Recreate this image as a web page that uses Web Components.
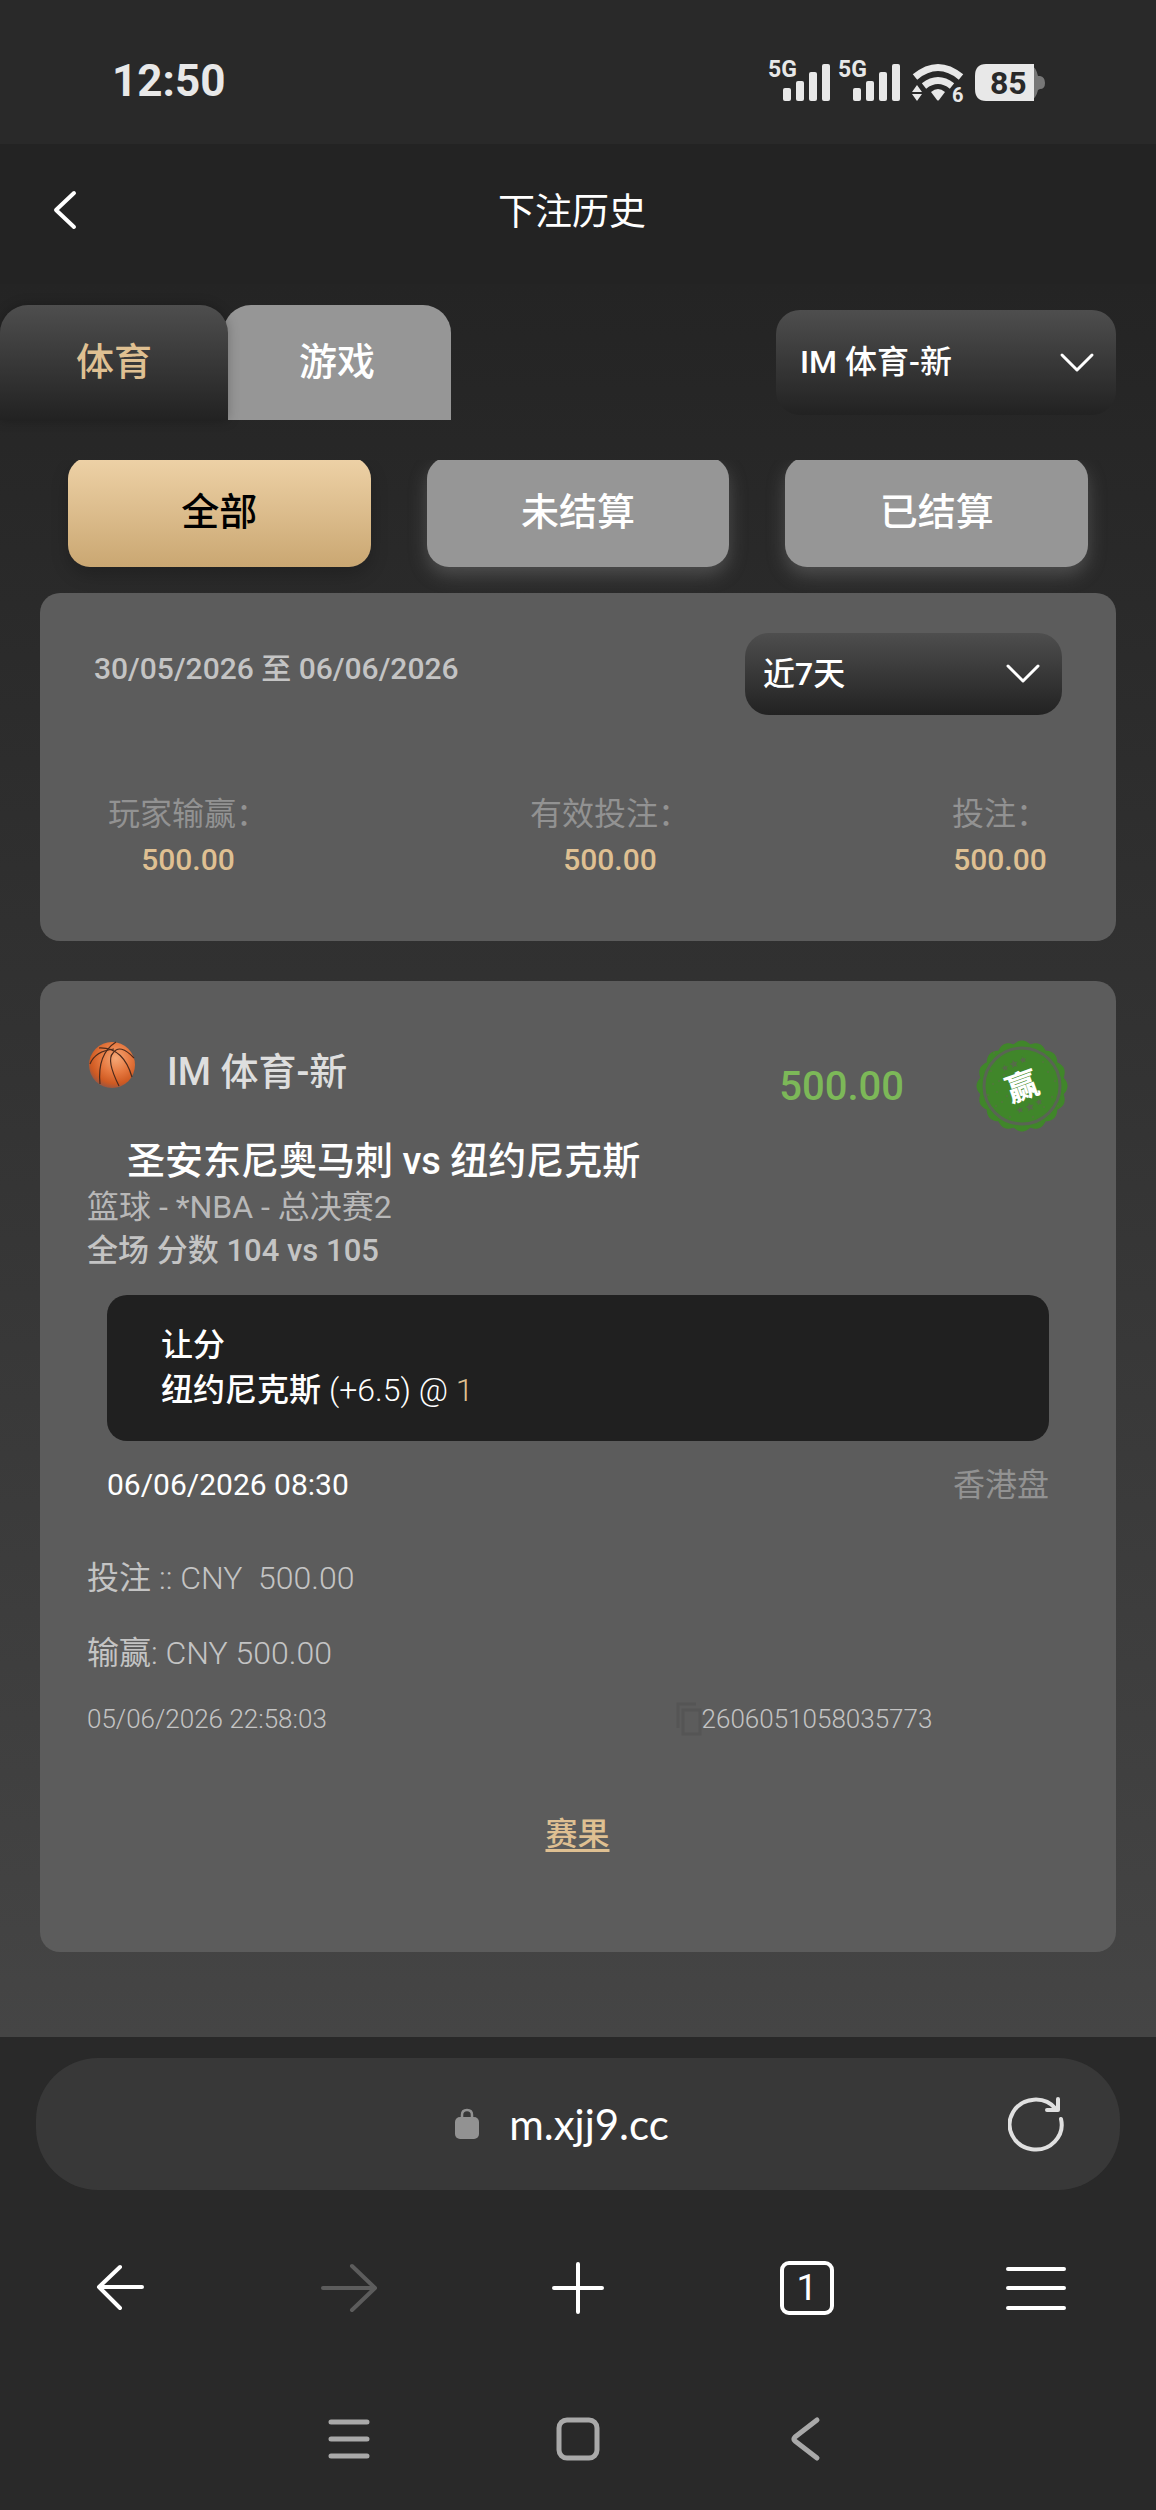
<!DOCTYPE html>
<html lang="zh-CN">
<head>
<meta charset="UTF-8">
<meta name="viewport" content="width=device-width, initial-scale=1">
<title>下注历史</title>
<style>
    :root {
        --bar: #292929;
        --header: #232323;
        --card: #5c5c5c;
        --gold: #dfc092;
        --grey: #969696;
        --muted: #929292;
        --soft: #c4c4c4;
        --dark-gradient: linear-gradient(#4e4e4e, #222);
    }
    body {
        margin: 0;
        min-height: 100vh;
        background: var(--bar);
        color: #fff;
        font-family: Roboto, "Noto Sans CJK SC", sans-serif;
        font-size: 32px;
        line-height: 45px;
    }
    main {
        padding: 21px 0 85px;
        background: linear-gradient(#242424, #454545);
    }
    .toolbar {
        display: flex;
        align-items: center;
        justify-content: space-between;
        padding-right: 40px;
    }
    .toolbar select-box {
        width: 340px;
    }
    bet-summary, bet-card {
        margin: 0 40px;
    }
    bet-card {
        margin-top: 40px;
    }
</style>
</head>
<body>

<status-bar>12:50</status-bar>
<page-header>下注历史</page-header>

<main>
    <div class="toolbar">
        <tab-group>
            <tab-item active>体育</tab-item>
            <tab-item>游戏</tab-item>
        </tab-group>
        <select-box label="平台" value="IM 体育-新"></select-box>
    </div>
    <filter-row>
        <filter-button active>全部</filter-button>
        <filter-button>未结算</filter-button>
        <filter-button>已结算</filter-button>
    </filter-row>
    <bet-summary>
        <span slot="range">30/05/2026 至 06/06/2026</span>
        <stat-item label="玩家输赢：">500.00</stat-item>
        <stat-item label="有效投注：">500.00</stat-item>
        <stat-item label="投注：">500.00</stat-item>
    </bet-summary>
    <bet-card>
        <span slot="provider">IM 体育-新</span>
        <span slot="amount">500.00</span>
        <span slot="match">圣安东尼奥马刺 vs 纽约尼克斯</span>
        <span slot="league">篮球 - *NBA - 总决赛2</span>
        <span slot="score">全场 分数 104 vs 105</span>
        <span slot="market">让分</span>
        <span slot="team">纽约尼克斯</span>
        <span slot="line">(+6.5) @</span>
        <span slot="odds">1</span>
        <span slot="start">06/06/2026 08:30</span>
        <span slot="type">香港盘</span>
        <span slot="placed">05/06/2026 22:58:03</span>
        <span slot="id">2606051058035773</span>
    </bet-card>
</main>

<browser-bar>m.xjj9.cc</browser-bar>
<system-nav></system-nav>

<script>
class BaseElement extends HTMLElement {

    constructor() {
        super();
        this.attachShadow({ mode: 'open' });
    }

    getMarkup() {
        return '';
    }

    getStyles() {
        return '';
    }

    getTemplate() {
        const template = document.createElement('template');
        template.innerHTML = `
        <style>
        :host { display: block; }
        button {
            margin: 0;
            padding: 0;
            border: 0;
            background: none;
            color: inherit;
            font: inherit;
            cursor: pointer;
        }
        svg { display: block; }
        ${this.getStyles()}
        </style>
        ${this.getMarkup()}
        `;
        return template;
    }

    connectedCallback() {
        this.shadowRoot.appendChild(this.getTemplate().content.cloneNode(true));
    }
}

class StatusBar extends BaseElement {

    getSignal(x) {
        return `
        <text x="${x}" y="20" font-size="23">5G</text>
        <rect x="${x + 15}" y="31" width="8" height="13" rx="2"/>
        <rect x="${x + 28}" y="24" width="8" height="20" rx="2"/>
        <rect x="${x + 41}" y="15" width="8" height="29" rx="2"/>
        <rect x="${x + 54}" y="7" width="8" height="37" rx="2"/>
        `;
    }

    getMarkup() {
        return `
        <time><slot></slot></time>
        <svg width="278" height="64" viewBox="0 -8 278 64" fill="#e8e8e8" font-weight="700">
            ${this.getSignal(0)}
            ${this.getSignal(70)}
            <g fill="none" stroke="#e8e8e8" stroke-width="7">
                <path d="M147 20 Q170 1 193 20"/>
                <path d="M156 29 Q170 18 184 29"/>
            </g>
            <path d="M163 35 Q170 29 177 35 L171 43 Q170 44 169 43Z"/>
            <path d="M144 35 L149 28 L154 35Z M144 37 L149 44 L154 37Z"/>
            <text x="184" y="45" font-size="20">6</text>
            <path fill="#777" d="M262 7 Q268 10 270 19 L272 19 Q277 20 277 26 Q277 32 272 32 L270 33 Q268 42 262 44Z"/>
            <path d="M218 7 H266 V44 H218 Q207 44 207 32 V19 Q207 7 218 7Z"/>
            <text x="222" y="37" font-size="32" fill="#292929">85</text>
        </svg>
        `;
    }

    getStyles() {
        return `
        :host {
            display: flex;
            align-items: center;
            justify-content: space-between;
            box-sizing: border-box;
            height: 144px;
            padding: 18px 110px 0 112px;
            background: var(--bar);
            color: #e8e8e8;
        }
        time {
            font-size: 44px;
            font-weight: 700;
        }
        `;
    }
}

class PageHeader extends BaseElement {

    getMarkup() {
        return `
        <button aria-label="返回">
            <svg width="28" height="44" viewBox="0 0 28 44" fill="none" stroke="#fff" stroke-width="4" stroke-linecap="round" stroke-linejoin="round">
                <path d="M24 3 L6 20 L24 37"/>
            </svg>
        </button>
        <h1><slot></slot></h1>
        `;
    }

    getStyles() {
        return `
        :host {
            display: flex;
            align-items: center;
            box-sizing: border-box;
            height: 140px;
            padding: 0 90px 4px 50px;
            background: var(--header);
        }
        h1 {
            flex: 1;
            margin: 0;
            text-align: center;
            font-size: 37px;
            font-weight: 400;
        }
        `;
    }
}

class TabGroup extends BaseElement {

    getMarkup() {
        return `<slot></slot>`;
    }

    getStyles() {
        return `
        :host { display: flex; }
        `;
    }
}

class TabItem extends BaseElement {

    getMarkup() {
        return `<button><slot></slot></button>`;
    }

    getStyles() {
        return `
        :host { margin-right: -5px; }
        button {
            width: 228px;
            height: 115px;
            border-radius: 28px 28px 0 0;
            background: var(--grey);
            font-size: 38px;
            font-weight: 500;
        }
        :host([active]) {
            position: relative;
            z-index: 1;
        }
        :host([active]) button {
            background: var(--dark-gradient);
            box-shadow: 0 0 12px rgba(0, 0, 0, .25);
            color: var(--gold);
        }
        `;
    }
}

class SelectBox extends BaseElement {

    getMarkup() {
        return `
        <select aria-label="${this.getAttribute('label')}">
            <option>${this.getAttribute('value')}</option>
        </select>
        <svg width="36" height="24" viewBox="0 0 36 24" fill="none" stroke="#fff" stroke-width="3" stroke-linecap="round" stroke-linejoin="round">
            <path d="M3 4 L18 19 L33 4"/>
        </svg>
        `;
    }

    getStyles() {
        return `
        :host {
            display: grid;
            align-items: center;
            height: var(--select-height, 105px);
            border-radius: 24px;
            background: var(--dark-gradient);
        }
        select {
            grid-area: 1 / 1;
            width: 100%;
            height: 100%;
            padding: 0 0 0 var(--select-padding, 24px);
            border: 0;
            border-radius: inherit;
            background: none;
            appearance: none;
            color: #fff;
            font: inherit;
            font-weight: 500;
        }
        svg {
            grid-area: 1 / 1;
            justify-self: end;
            margin-right: 21px;
            pointer-events: none;
        }
        `;
    }
}

class FilterRow extends BaseElement {

    getMarkup() {
        return `<slot></slot>`;
    }

    getStyles() {
        return `
        :host {
            display: grid;
            grid-template-columns: repeat(3, 1fr);
            gap: 56px;
            margin-top: 40px;
            padding: 0 68px 26px;
            overflow: hidden;
        }
        `;
    }
}

class FilterButton extends BaseElement {

    getMarkup() {
        return `<button><slot></slot></button>`;
    }

    getStyles() {
        return `
        :host { margin-top: -3px; }
        button {
            display: block;
            width: 100%;
            height: 110px;
            border-radius: 22px;
            background: var(--grey);
            box-shadow: 0 8px 18px rgba(150, 150, 150, .35);
            font-size: 38px;
            font-weight: 500;
        }
        :host([active]) button {
            background: linear-gradient(#eed2a7, #caa772);
            box-shadow: 0 8px 18px rgba(0, 0, 0, .2);
            color: #000;
        }
        `;
    }
}

class StatItem extends BaseElement {

    getMarkup() {
        return `
        <span>${this.getAttribute('label')}</span>
        <b><slot></slot></b>
        `;
    }

    getStyles() {
        return `
        :host {
            display: flex;
            flex-direction: column;
            align-items: center;
        }
        span { color: var(--muted); }
        b {
            color: var(--gold);
            font-size: 30px;
            font-weight: 500;
        }
        `;
    }
}

class BetSummary extends BaseElement {

    getMarkup() {
        return `
        <div class="top">
            <slot name="range"></slot>
            <select-box label="日期" value="近7天"></select-box>
        </div>
        <div class="stats"><slot></slot></div>
        `;
    }

    getStyles() {
        return `
        :host {
            padding: 40px 54px 59px;
            border-radius: 20px;
            background: var(--card);
        }
        .top {
            display: flex;
            align-items: flex-start;
            justify-content: space-between;
        }
        .top select-box {
            --select-height: 82px;
            --select-padding: 18px;
            width: 317px;
        }
        ::slotted([slot=range]) {
            color: var(--soft);
            font-size: 30px;
            font-weight: 500;
            line-height: 72px;
        }
        .stats {
            display: flex;
            justify-content: space-between;
            margin-top: 77px;
            padding: 0 14px;
        }
        `;
    }
}

class BasketballIcon extends BaseElement {

    getMarkup() {
        return `
        <svg width="48" height="50" viewBox="-2 0 48 50">
            <defs>
                <radialGradient id="skin" cx=".58" cy=".35" r=".65">
                    <stop offset="0" stop-color="#f5a877"/>
                    <stop offset=".5" stop-color="#e6783f"/>
                    <stop offset=".85" stop-color="#cf5a22"/>
                    <stop offset="1" stop-color="#a5563a"/>
                </radialGradient>
            </defs>
            <circle cx="23" cy="25" r="23" fill="url(#skin)"/>
            <g fill="none" stroke="#4c2a1c" stroke-width="1.2">
                <path d="M27 2 Q8 14 11 44"/>
                <path d="M10 8 Q34 7 43 37"/>
                <path d="M45 18 Q31 3 24 13 Q17 20 30 46"/>
                <path d="M1 24 Q6 11 25 9"/>
            </g>
        </svg>
        `;
    }
}

class WinStamp extends BaseElement {

    getEdge() {
        const lobes = 16;
        let d = '';
        for (let i = 0; i <= lobes * 12; i++) {
            const a = i / (lobes * 12) * Math.PI * 2;
            const r = 42.5 + 3 * Math.abs(Math.cos(a * lobes / 2));
            d += (i ? 'L' : 'M') + (46 + r * Math.cos(a)).toFixed(1) + ' ' + (46 + r * Math.sin(a)).toFixed(1);
        }
        return d + 'Z';
    }

    getStar(x, y, size) {
        let d = '';
        for (let i = 0; i < 10; i++) {
            const a = i * Math.PI / 5 - Math.PI / 2 - .3;
            const r = i % 2 ? size * .45 : size;
            d += (i ? 'L' : 'M') + (x + r * Math.cos(a)).toFixed(1) + ' ' + (y + r * Math.sin(a)).toFixed(1);
        }
        return `<path d="${d}Z" fill="#566b49"/>`;
    }

    getSpecks() {
        const specks = [[18, 13], [15, 31], [21, 52], [26, 62], [20, 66], [34, 77], [72, 32], [79, 41], [76, 57], [68, 67], [28, 35], [17, 44], [57, 77], [12, 55], [67, 22], [31, 56], [23, 41], [82, 66]];
        return specks.map(([x, y]) => `<circle cx="${x}" cy="${y}" r=".9"/>`).join('');
    }

    getMarkup() {
        return `
        <svg width="92" height="92" viewBox="0 0 92 92">
            <path d="${this.getEdge()}" fill="#40862a"/>
            <circle cx="46" cy="46" r="38" fill="none" stroke="#596553" stroke-width="3"/>
            <g fill="#54753f">${this.getSpecks()}</g>
            ${this.getStar(29, 28, 3.5)}
            ${this.getStar(38, 24, 4.5)}
            ${this.getStar(47, 20, 3.5)}
            ${this.getStar(44, 70, 3.5)}
            ${this.getStar(54, 67, 4.5)}
            ${this.getStar(63, 62, 3.5)}
            <text x="46" y="58" fill="#fff" font-size="32" font-weight="900" text-anchor="middle" transform="rotate(-20 46 46)">赢</text>
        </svg>
        `;
    }
}

class BetCard extends BaseElement {

    getMarkup() {
        return `
        <div class="head">
            <basketball-icon></basketball-icon>
            <div class="provider"><slot name="provider"></slot></div>
            <div class="amount"><slot name="amount"></slot></div>
            <win-stamp></win-stamp>
        </div>
        <h2><slot name="match"></slot></h2>
        <div class="league"><slot name="league"></slot></div>
        <div class="score"><slot name="score"></slot></div>
        <div class="pick">
            <div><slot name="market"></slot></div>
            <div>
                <slot name="team"></slot>
                <span class="line"><slot name="line"></slot> <em><slot name="odds"></slot></em></span>
            </div>
        </div>
        <div class="start">
            <span class="time"><slot name="start"></slot></span>
            <span class="type"><slot name="type"></slot></span>
        </div>
        <div class="money">投注 <span>:: CNY&nbsp; 500.00</span></div>
        <div class="money">输赢<span>: CNY 500.00</span></div>
        <div class="foot">
            <slot name="placed"></slot>
            <div class="ticket">
                <button aria-label="复制">
                    <svg width="26" height="36" viewBox="0 0 26 36" fill="none" stroke="#555" stroke-width="3">
                        <path d="M2 27 V3 H20"/>
                        <rect x="7" y="9" width="17" height="24"/>
                    </svg>
                </button>
                <slot name="id"></slot>
            </div>
        </div>
        <a href="#result">赛果</a>
        `;
    }

    getStyles() {
        return `
        :host {
            display: flex;
            flex-direction: column;
            padding: 59px 48px 94px 47px;
            border-radius: 20px;
            background: var(--card);
        }
        .head {
            display: flex;
            align-items: center;
        }
        basketball-icon, .provider { align-self: flex-start; }
        .provider {
            flex: 1;
            margin-left: 32px;
            color: #dedede;
            font-size: 38px;
            font-weight: 500;
            line-height: 64px;
        }
        .amount {
            margin-right: 72px;
            color: #7cb858;
            font-size: 40px;
            font-weight: 500;
        }
        h2 {
            margin: 5px 0 0 40px;
            font-size: 38px;
            font-weight: 500;
            line-height: 48px;
        }
        .league, .score, .start { line-height: 44px; }
        .league { color: #b8b8b8; }
        .score {
            color: var(--soft);
            font-size: 31px;
            font-weight: 500;
        }
        .pick {
            margin: 22px 19px 0 20px;
            padding: 28px 54px;
            border-radius: 20px;
            background: #202020;
            font-weight: 500;
        }
        .line { font-weight: 300; }
        em {
            color: var(--gold);
            font-style: normal;
        }
        .start {
            display: flex;
            justify-content: space-between;
            margin: 22px 19px 34px 20px;
        }
        .time { font-size: 30px; }
        .type { color: var(--muted); }
        .money {
            color: var(--soft);
            line-height: 75px;
        }
        .money span { font-weight: 300; }
        .foot {
            display: grid;
            grid-template-columns: 3fr 2fr;
            color: var(--soft);
            font-size: 26px;
            font-weight: 300;
            line-height: 56px;
        }
        .ticket {
            display: flex;
            align-items: center;
        }
        a {
            align-self: center;
            margin-top: 63px;
            color: var(--gold);
            font-weight: 500;
            line-height: 48px;
            text-decoration-thickness: 3px;
            text-underline-offset: 4px;
        }
        `;
    }
}

class BrowserBar extends BaseElement {

    getMarkup() {
        return `
        <div class="address">
            <button class="url">
                <svg width="24" height="32" viewBox="0 0 24 32">
                    <rect y="9" width="24" height="22" rx="5" fill="#929292"/>
                    <path d="M7 10 V7 Q7 2 12 2 Q17 2 17 7 V10" fill="none" stroke="#929292" stroke-width="2.5"/>
                </svg>
                <slot></slot>
            </button>
            <button aria-label="刷新">
                <svg width="56" height="56" viewBox="0 0 56 56" fill="none" stroke="#e0e0e0" stroke-width="4" stroke-linecap="round" stroke-linejoin="round">
                    <path d="M53 23 A26 25 0 1 1 48 13"/>
                    <path d="M50 3 V14 H39"/>
                </svg>
            </button>
        </div>
        <nav>
            <button aria-label="后退">
                <svg width="60" height="60" viewBox="0 0 60 60"><path d="M30 9 L9 29 L30 50 M9 29 H52"/></svg>
            </button>
            <button aria-label="前进" disabled>
                <svg width="60" height="60" viewBox="0 0 60 60"><path d="M33 8 L56 30 L33 52 M56 30 H4"/></svg>
            </button>
            <button aria-label="新标签页">
                <svg width="60" height="60" viewBox="0 0 60 60"><path d="M30 6 V54 M6 30 H54"/></svg>
            </button>
            <button aria-label="标签页"><span>1</span></button>
            <button aria-label="菜单">
                <svg width="60" height="60" viewBox="0 0 60 60"><path d="M2 11 H58 M2 30 H58 M2 50 H58"/></svg>
            </button>
        </nav>
        `;
    }

    getStyles() {
        return `
        :host {
            padding-top: 21px;
            background: var(--bar);
        }
        .address {
            display: flex;
            align-items: center;
            height: 132px;
            margin: 0 36px;
            padding: 0 56px 0 80px;
            border-radius: 62px;
            background: #383838;
        }
        .url {
            display: flex;
            flex: 1;
            align-items: center;
            justify-content: center;
            gap: 30px;
            font-family: Lato, sans-serif;
            font-size: 42px;
        }
        nav {
            display: grid;
            grid-template-columns: repeat(5, 1fr);
            justify-items: center;
            align-items: center;
            height: 196px;
            padding: 0 6px;
        }
        nav svg {
            fill: none;
            stroke: #fff;
            stroke-width: 4;
            stroke-linecap: round;
            stroke-linejoin: round;
        }
        nav button:disabled svg { stroke: #5c5c5c; }
        nav span {
            display: block;
            box-sizing: border-box;
            width: 54px;
            height: 54px;
            border: 4px solid #fff;
            border-radius: 9px;
            font-size: 37px;
            line-height: 46px;
        }
        `;
    }
}

class SystemNav extends BaseElement {

    getMarkup() {
        return `
        <button aria-label="最近任务">
            <svg width="48" height="48" viewBox="0 0 48 48"><path d="M6 7 H42 M6 24 H42 M6 41 H42"/></svg>
        </button>
        <button aria-label="主屏幕">
            <svg width="48" height="48" viewBox="0 0 48 48"><rect x="5" y="5" width="38" height="38" rx="8"/></svg>
        </button>
        <button aria-label="返回">
            <svg width="48" height="48" viewBox="0 0 48 48"><path d="M34 5 L12 22 Q10 24 12 26 L34 43"/></svg>
        </button>
        `;
    }

    getStyles() {
        return `
        :host {
            display: grid;
            grid-template-columns: repeat(5, 1fr);
            justify-items: center;
            align-items: center;
            height: 105px;
            padding: 0 6px 18px;
            background: var(--bar);
        }
        button:first-of-type { grid-column-start: 2; }
        svg {
            fill: none;
            stroke: #a9a9a9;
            stroke-width: 5;
            stroke-linecap: round;
            stroke-linejoin: round;
        }
        `;
    }
}

customElements.define('status-bar', StatusBar);
customElements.define('page-header', PageHeader);
customElements.define('tab-group', TabGroup);
customElements.define('tab-item', TabItem);
customElements.define('select-box', SelectBox);
customElements.define('filter-row', FilterRow);
customElements.define('filter-button', FilterButton);
customElements.define('stat-item', StatItem);
customElements.define('bet-summary', BetSummary);
customElements.define('basketball-icon', BasketballIcon);
customElements.define('win-stamp', WinStamp);
customElements.define('bet-card', BetCard);
customElements.define('browser-bar', BrowserBar);
customElements.define('system-nav', SystemNav);
</script>
</body>
</html>
